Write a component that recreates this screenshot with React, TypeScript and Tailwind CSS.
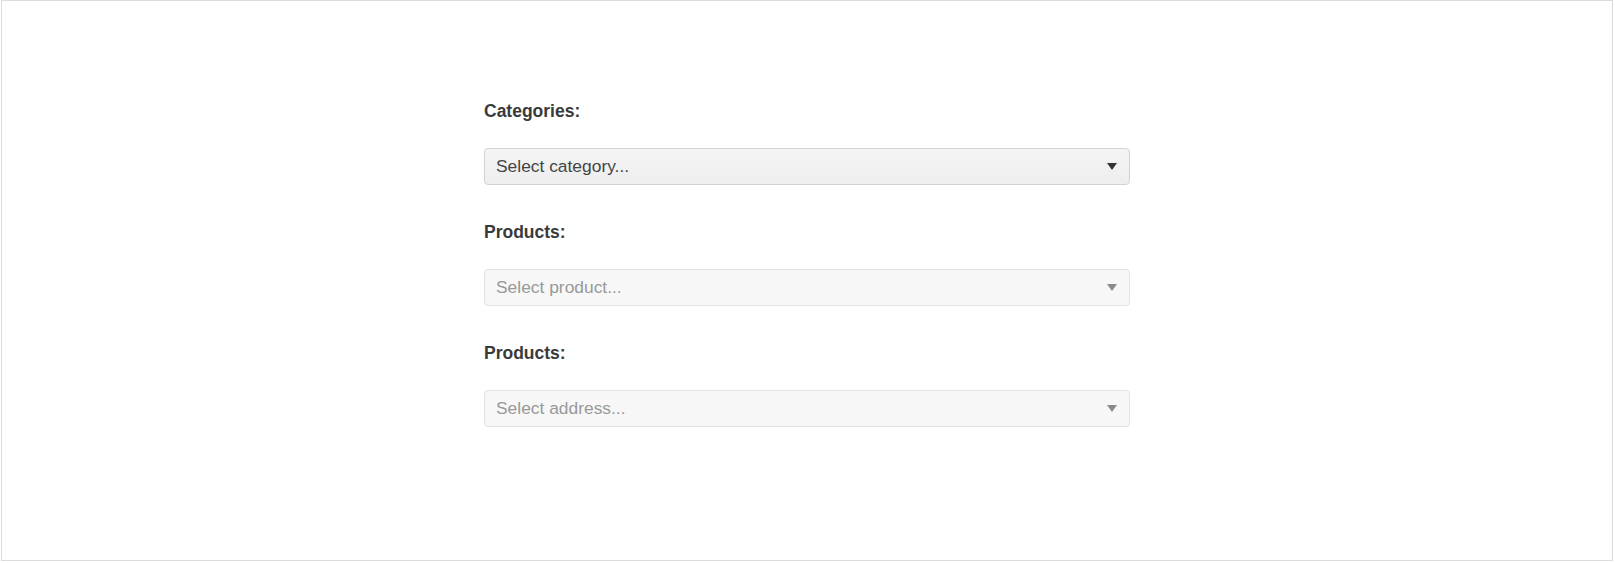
import React from 'react';

type Field = {
  label: string;
  placeholder: string;
  disabled?: boolean;
};

const fields: Field[] = [
  { label: 'Categories:', placeholder: 'Select category...' },
  { label: 'Products:', placeholder: 'Select product...', disabled: true },
  { label: 'Products:', placeholder: 'Select address...', disabled: true },
];

function Caret({ disabled }: { disabled?: boolean }) {
  return (
    <svg width="10" height="7" viewBox="0 0 10 7" className={disabled ? 'fill-[#8a8a8a]' : 'fill-[#333]'}>
      <path d="M0 0 H10 L5 7 Z" />
    </svg>
  );
}

function SelectBox({ placeholder, disabled }: { placeholder: string; disabled?: boolean }) {
  return (
    <div
      className={
        disabled
          ? 'flex h-[37px] items-center justify-between rounded-[4px] border border-[#e2e2e2] bg-[#f7f7f7] pl-[11px] pr-[12px] text-[17.4px] text-[#999]'
          : 'flex h-[37px] items-center justify-between rounded-[4px] border border-[#d2d2d2] bg-gradient-to-b from-[#f4f4f4] to-[#eeeeee] pl-[11px] pr-[12px] text-[17.4px] text-[#444]'
      }
    >
      <span>{placeholder}</span>
      <Caret disabled={disabled} />
    </div>
  );
}

export default function App() {
  return (
    <div className="bg-white" style={{ fontFamily: '"Liberation Sans", Arial, sans-serif' }}>
      <div className="ml-px h-[561px] w-[1612px] border border-[#dcdcdc] bg-white">
        <div className="mx-auto flex w-[646px] flex-col pt-[98px]">
          {fields.map((f, i) => (
            <div key={i} className="mb-[35px] flex flex-col">
              <div className="text-[17.5px] font-bold leading-[24px] text-[#3a3a3a]">{f.label}</div>
              <div className="mt-[25px]">
                <SelectBox placeholder={f.placeholder} disabled={f.disabled} />
              </div>
            </div>
          ))}
        </div>
      </div>
    </div>
  );
}
